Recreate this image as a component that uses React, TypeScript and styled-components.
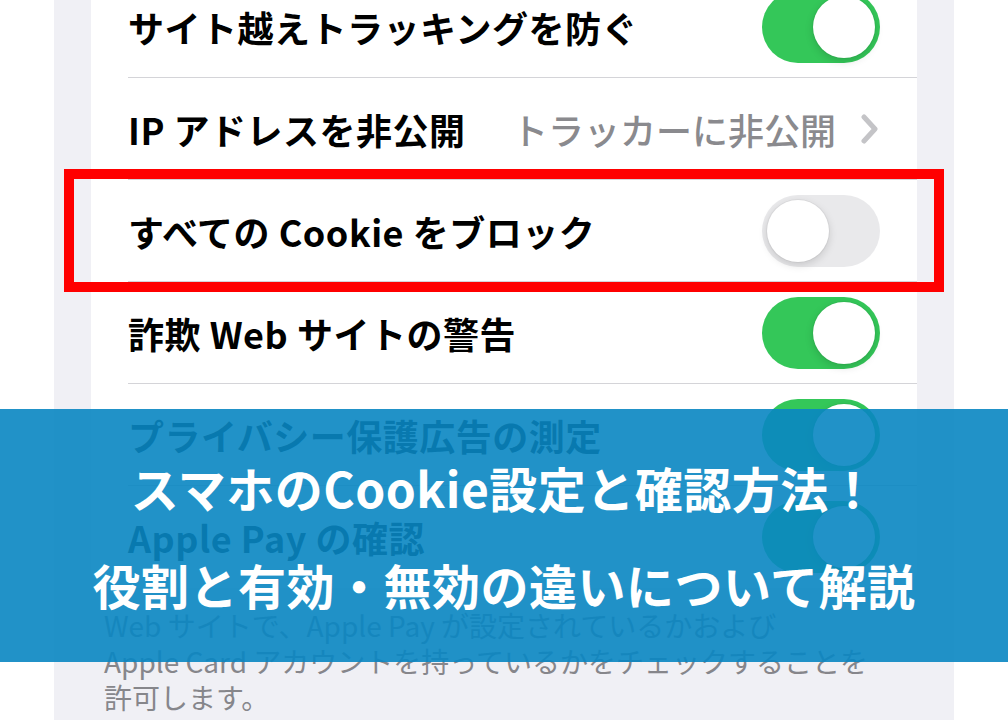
import React from "react";
import styled, { createGlobalStyle } from "styled-components";

const GlobalStyle = createGlobalStyle`
  html, body {
    margin: 0;
    padding: 0;
    background: #ffffff;
  }
  body {
    font-family: "Noto Sans CJK JP", "Noto Sans", sans-serif;
  }
`;

const Page = styled.div`
  position: relative;
  width: 1008px;
  height: 720px;
  overflow: hidden;
  padding: 0 54px;
  box-sizing: border-box;
  background: #ffffff;
`;

const Phone = styled.div`
  display: flow-root;
  height: 100%;
  background: #f0f0f5;
  padding: 0 37px;
  box-sizing: border-box;
`;

const Card = styled.div`
  margin-top: -24px;
  background: #ffffff;
  border-radius: 0 0 20px 20px;
`;

const Row = styled.div`
  display: flex;
  padding-left: 37px;
`;

const RowInner = styled.div<{ $last?: boolean }>`
  flex: 1;
  height: 101px;
  display: flex;
  align-items: center;
  justify-content: space-between;
  padding-right: 37px;
  border-bottom: 1px solid ${(p) => (p.$last ? "transparent" : "#d4d4d8")};
`;

const Label = styled.span`
  font-size: 36px;
  font-weight: 600;
  color: #000000;
  letter-spacing: 0.5px;
  white-space: pre;
`;

const ValueWrap = styled.div`
  display: flex;
  align-items: center;
  gap: 24px;
`;

const Value = styled.span`
  font-size: 36px;
  font-weight: 500;
  color: #8a8a8e;
  white-space: nowrap;
`;

const Toggle = styled.div<{ $on: boolean }>`
  position: relative;
  width: 118px;
  height: 72px;
  border-radius: 36px;
  background: ${(p) => (p.$on ? "#34c759" : "#e9e9eb")};
  flex-shrink: 0;

  &::after {
    content: "";
    position: absolute;
    top: 5px;
    left: ${(p) => (p.$on ? "51px" : "5px")};
    width: 62px;
    height: 62px;
    border-radius: 50%;
    background: #ffffff;
    box-shadow: 0 3px 8px rgba(0, 0, 0, 0.15), 0 0 0 1px rgba(0, 0, 0, 0.04);
  }
`;

const Footer = styled.div`
  padding: 19px 20px 0 13px;
  font-size: 28px;
  line-height: 36px;
  font-weight: 400;
  color: #86868b;
  white-space: pre;
`;

const Highlight = styled.div`
  position: absolute;
  left: 64px;
  top: 169px;
  width: 880px;
  height: 123px;
  box-sizing: border-box;
  border: 10px solid #ff0000;
`;

const Banner = styled.div`
  position: absolute;
  left: 0;
  right: 0;
  top: 409px;
  height: 253px;
  background: rgba(9, 134, 194, 0.9);
  display: flex;
  flex-direction: column;
  align-items: center;
  justify-content: center;
`;

const BannerLine = styled.div`
  color: #ffffff;
  font-size: 48px;
  font-weight: 700;
  line-height: 97px;
  white-space: nowrap;
  letter-spacing: 0.5px;
`;

const Chevron = () => (
  <svg width="20" height="30" viewBox="0 0 20 30">
    <path
      d="M4 3 L15 15 L4 27"
      fill="none"
      stroke="#c4c4c7"
      strokeWidth="5"
      strokeLinecap="round"
      strokeLinejoin="round"
    />
  </svg>
);

const rows: { label: string; on?: boolean; value?: string }[] = [
  { label: "サイト越えトラッキングを防ぐ", on: true },
  { label: "IP アドレスを非公開", value: "トラッカーに非公開" },
  { label: "すべての Cookie をブロック", on: false },
  { label: "詐欺 Web サイトの警告", on: true },
  { label: "プライバシー保護広告の測定", on: true },
  { label: "Apple Pay の確認", on: true },
];

export default function App() {
  return (
    <>
      <GlobalStyle />
      <Page>
        <Phone>
          <Card>
            {rows.map((r, i) => (
              <Row key={r.label}>
                <RowInner $last={i === rows.length - 1}>
                  <Label>{r.label}</Label>
                  {r.value ? (
                    <ValueWrap>
                      <Value>{r.value}</Value>
                      <Chevron />
                    </ValueWrap>
                  ) : (
                    <Toggle $on={!!r.on} />
                  )}
                </RowInner>
              </Row>
            ))}
          </Card>
          <Footer>
            {"Web サイトで、Apple Pay が設定されているかおよび\nApple Card アカウントを持っているかをチェックすることを\n許可します。"}
          </Footer>
        </Phone>
        <Highlight />
        <Banner>
          <BannerLine>スマホのCookie設定と確認方法！</BannerLine>
          <BannerLine>役割と有効・無効の違いについて解説</BannerLine>
        </Banner>
      </Page>
    </>
  );
}
